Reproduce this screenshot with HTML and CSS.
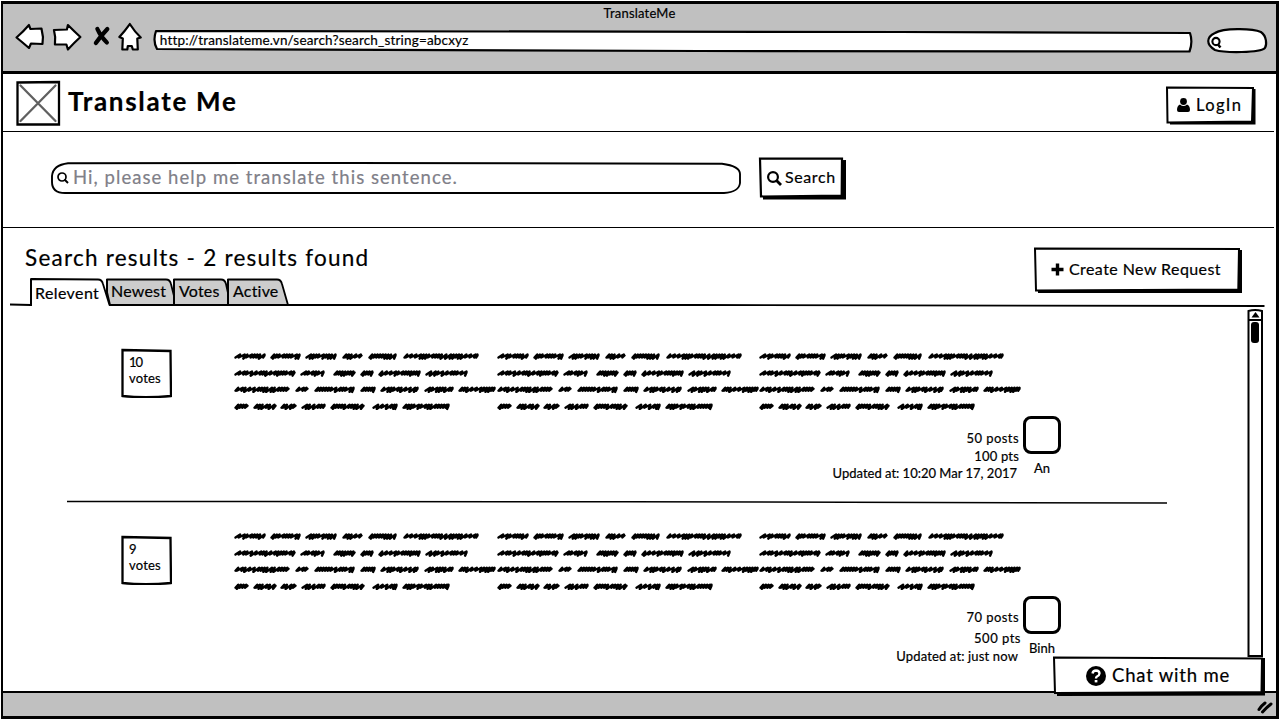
FILE: index.html
```
<!DOCTYPE html>
<html lang="en">
<head>
<meta charset="utf-8">
<title>TranslateMe</title>
<link rel="stylesheet" href="styles.css">
</head>
<body>
<div class="window">
  <header class="chrome">
    <div class="chrome-title"><span class="t">TranslateMe</span></div>
    <div class="toolbar">
      <svg class="nav-icons" width="130" height="32" viewBox="14 21 130 32">
        <g fill="#fff" stroke="#000" stroke-width="2.200" stroke-linejoin="round">
          <path d="M16.500 37.500 Q23 32 29 25 L30.500 29 L41.500 28.500 L43 37 L42.500 44 L31 43.500 L29 48 Q22 42 16.500 37.500Z"/>
          <path d="M54 30 L67 29.500 L68 25 Q75 32 80.500 37 Q74 43 68 49.500 L66.500 44.500 L55 44.500 Q56 37 54 30Z"/>
          <path d="M130 24 Q125 31 119.500 37 L123 38.500 L122.500 49.500 L127.500 49.500 L128 46 L132 46 L133 49.500 L138 49.500 L137.500 38.500 L141 37.500 Q135 32 130 24Z"/>
        </g>
        <path d="M97.500 29 Q101 37 107 42.500 M107.500 29 Q101 36 96 43" fill="none" stroke="#000" stroke-width="4.200" stroke-linecap="round"/>
      </svg>
      <div class="address">
        <svg class="backdrop" width="1042" height="24" viewBox="152 29 1042 24"><path d="M156 31 Q500 31.500 900 32 L1190 33 Q1193 42 1189.500 51.500 L700 51 L157 49 Q152.500 41 156 31Z" fill="#fff" stroke="#000" stroke-width="2.200" stroke-linejoin="round"/></svg>
        <span class="t">http://translateme.vn/search?search_string=abcxyz</span>
      </div>
      <svg class="mini-search" width="62" height="28" viewBox="1206 27 62 28"><path d="M1215 33 C1223 28 1252 28 1261 32 C1267 36 1267 45 1265 48 C1260 53 1225 53 1215 50 C1206 45 1206 37 1215 33Z" fill="#fff" stroke="#000" stroke-width="2.200"/><circle cx="1216" cy="41.500" r="3.600" fill="none" stroke="#000" stroke-width="2.100"/><path d="M1218 44.500 L1220.500 47.500" stroke="#000" stroke-width="2.600"/></svg>
    </div>
  </header>

  <section class="app-head">
    <svg class="logo" width="46" height="46" viewBox="15 80 46 46"><path d="M17.500 82.500 L59 82 L59 124.500 L17.500 124.500Z" fill="#fff" stroke="#000" stroke-width="2.300"/><path d="M20.500 85.500 L55.500 121 M55.500 85.500 L20.500 121" stroke="#606060" stroke-width="2.300" stroke-linecap="round"/></svg>
    <h1><span class="t">Translate Me</span></h1>
    <button class="btn login">
      <svg class="backdrop" width="92" height="40" viewBox="1165 86 92 40"><path d="M1170 91 L1255.500 89 V124.500 H1170Z"/><path d="M1167 87.500 L1253 88 L1252 121.500 L1167.500 122.500Z" fill="#fff" stroke="#000" stroke-width="2"/></svg>
      <svg width="13" height="14" viewBox="0 0 13 14"><circle cx="6.500" cy="3.500" r="3.400"/><path d="M3 6.500 Q6.500 9.500 10 6.500 Q13 7.500 13 12 Q13 14 11 14 H2 Q0 14 0 12 Q0 7.500 3 6.500Z"/></svg>
      <span class="t">LogIn</span>
    </button>
  </section>

  <section class="search-row">
    <div class="field">
      <svg class="backdrop" width="692" height="34" viewBox="50 161 692 34"><path d="M68 163.200 L350 163 L722 163.700 Q740 166 740 174 V183 Q739 192 724 193 H65 Q52 193 52 182 V176 Q53 165 68 163.200Z" fill="#fff" stroke="#000" stroke-width="1.900"/></svg>
      <svg width="12" height="12" viewBox="0 0 12 12"><circle cx="5" cy="5" r="4" fill="none" stroke="#000" stroke-width="1.700"/><path d="M7.500 7.500 L11 11" stroke="#000" stroke-width="2"/></svg>
      <span class="t">Hi, please help me translate this sentence.</span>
    </div>
    <button class="btn find">
      <svg class="backdrop" width="88" height="43" viewBox="758 157 88 43"><path d="M763 162 L846 160 V199.500 H763Z"/><path d="M760 158.700 L842 158.500 L841.700 195.500 L761 196.500Z" fill="#fff" stroke="#000" stroke-width="2.200"/></svg>
      <svg width="15" height="15" viewBox="0 0 15 15"><circle cx="6" cy="6" r="4.900" fill="none" stroke="#000" stroke-width="2.200"/><path d="M9.500 9.500 L14 14" stroke="#000" stroke-width="2.800"/></svg>
      <span class="t">Search</span>
    </button>
  </section>

  <section class="results-head">
    <div class="results-left">
      <h2><span class="t">Search results - 2 results found</span></h2>
      <nav class="tabs">
        <svg class="backdrop" width="1257" height="32" viewBox="9 277 1257 32">
          <g stroke="#000" stroke-width="1.800" stroke-linejoin="round">
            <path d="M228 305 V279.500 H277 Q281 279.500 282 284 L288 305Z" fill="#ccc"/>
            <path d="M174 305 V279.500 H221 Q225 279.500 226 284 L228 293 V305Z" fill="#ccc"/>
            <path d="M107 279.500 H166 Q170 279.500 171 284 L174 296 V305 H110 L107 292Z" fill="#ccc"/>
            <path d="M10 304.500 L31 305 V279 L98 279.500 Q102 279.500 103 284 L109.500 305 L700 305 L1264.500 306" fill="none"/>
            <path d="M107 279 V296 M31 279 V306 M174 279 V306 M228 279 V306" fill="none"/>
          </g>
        </svg>
        <span class="t tab tab-active">Relevent</span><span class="t tab newest">Newest</span><span class="t tab votes-tab">Votes</span><span class="t tab">Active</span>
      </nav>
    </div>
    <button class="btn create">
      <svg class="backdrop" width="210" height="46" viewBox="1033 247 210 46"><path d="M1038 251 L1242 250 V293 H1038Z"/><path d="M1035 248.500 L1239 249 L1238.300 289.500 L1036 290.500Z" fill="#fff" stroke="#000" stroke-width="2"/></svg>
      <svg width="13" height="13" viewBox="0 0 13 13"><path d="M6.500 .5 V12.500 M.5 6.500 H12.500" stroke="#000" stroke-width="3.400"/></svg>
      <span class="t">Create New Request</span>
    </button>
  </section>

  <main class="list">
    <div class="entries">
      <article class="entry first">
        <div class="votes">
          <svg class="backdrop" width="52" height="50" viewBox="120 348 52 50"><path d="M122.500 350 L170.500 351 L171 396 Q145 398.500 122.500 396Z" fill="#fff" stroke="#000" stroke-width="2.300"/></svg>
          <span class="t ten">10</span><span class="t">votes</span>
        </div>
        <svg class="scribble" width="790" height="64" viewBox="0 0 790 64"></svg>
        <div class="meta">
          <div class="stats"><span class="t posts">50 posts</span><span class="t pts">100 pts</span><span class="t updated">Updated at: 10:20 Mar 17, 2017</span></div>
          <div class="user"><i class="avatar"></i><span class="t">An</span></div>
        </div>
      </article>
      <svg class="rule" width="1100" height="4" viewBox="0 0 1100 4"><path d="M0 1.500 L560 1.700 L1100 3" fill="none" stroke="#000" stroke-width="1.500"/></svg>
      <article class="entry second">
        <div class="votes">
          <svg class="backdrop" width="52" height="50" viewBox="120 348 52 50"><path d="M122.500 350 L170.500 351 L171 396 Q145 398.500 122.500 396Z" fill="#fff" stroke="#000" stroke-width="2.300"/></svg>
          <span class="t">9</span><span class="t">votes</span>
        </div>
        <svg class="scribble" width="790" height="64" viewBox="0 0 790 64"></svg>
        <div class="meta">
          <div class="stats"><span class="t posts">70 posts</span><span class="t pts">500 pts</span><span class="t updated">Updated at: just now</span></div>
          <div class="user"><i class="avatar"></i><span class="t">Binh</span></div>
        </div>
      </article>
    </div>
    <svg class="scrollbar" width="18" height="350" viewBox="1246 308 18 350"><path d="M1248.500 311 Q1255 309 1262 311 V656 H1248.500Z" fill="#fff" stroke="#000" stroke-width="2"/><path d="M1248 320 H1262" stroke="#000" stroke-width="2"/><path d="M1255.500 312 L1259.500 317.500 H1251.500Z"/><rect x="1251" y="322" width="8" height="21" rx="3"/></svg>
  </main>

  <footer class="status">
    <svg width="18" height="14" viewBox="1257 700 18 14"><path d="M1260 709.500 Q1262 706 1266 703 M1263.500 712 Q1268 707 1272 704" fill="none" stroke="#000" stroke-width="3" stroke-linecap="round"/></svg>
  </footer>

  <button class="btn chat">
    <svg class="backdrop" width="213" height="42" viewBox="1053 656 213 42"><path d="M1057 660 L1265 658 V695.500 L1057 696Z"/><path d="M1054 657.500 L1262 658.500 L1261.500 692 L1055 693Z" fill="#fff" stroke="#000" stroke-width="2"/></svg>
    <svg width="20" height="20" viewBox="0 0 20 20"><circle cx="10" cy="10" r="10"/><path d="M6.500 7.500 Q7 4.500 10 4.500 Q13.500 4.700 13.500 7.500 Q13.300 9.500 11 10.500 Q10 11 10 12.500" fill="none" stroke="#fff" stroke-width="2.400"/><rect x="8.700" y="14" width="2.700" height="2.400" fill="#fff"/></svg>
    <span class="t">Chat with me</span>
  </button>
</div>
<script src="scribble.js"></script>
</body>
</html>
```
FILE: styles.css
```
* { box-sizing: border-box; }
body { margin: 0; width: 1280px; height: 720px; overflow: hidden; background: #fff; font-family: Lato, "Open Sans", sans-serif; color: #000; }
h1, h2 { margin: 0; }
.window { position: relative; display: flex; flex-direction: column; width: 1278px; height: 718px; margin: 1px; border: 3px solid #000; border-left-width: 2px; background: #fff; }
.t { white-space: nowrap; -webkit-text-stroke: 0.2px currentColor; }
.backdrop { position: absolute; left: 0; top: 0; z-index: -1; }
.chrome { height: 70px; background: #c0c0c0; border-bottom: 3px solid #000; }
.chrome-title { height: 20px; text-align: center; font-size: 13px; line-height: 19px; letter-spacing: 0.2px; }
.toolbar { display: flex; align-items: flex-start; padding: 0 8px 0 11px; }
.nav-icons { margin-top: -3px; }
.address { position: relative; z-index: 0; width: 1042px; height: 24px; margin: 5px 14px 0 8px; padding-left: 8px; font-size: 13.5px; line-height: 23px; letter-spacing: 0.18px; }
.mini-search { margin-top: 3px; }
.app-head { display: flex; align-items: flex-start; height: 58px; padding: 6px 17px 0 12px; border-bottom: 1.5px solid #000; width: 1271px; }
h1 { flex: 1; padding-left: 7px; font-size: 26px; font-weight: 700; line-height: 42px; letter-spacing: 1.7px; }
.btn { position: relative; z-index: 0; display: flex; align-items: center; border: 0; padding: 0; background: none; color: #000; font-family: inherit; font-size: 16px; letter-spacing: 0.43px; }
.btn .t, .field .t { margin-top: -2px; }
.login { width: 92px; height: 38px; margin-top: 6px; padding-left: 12px; gap: 6px; font-size: 16.5px; letter-spacing: 1.4px; }
.btn.login .t { margin-top: 0; }
.search-row { display: flex; align-items: flex-start; height: 96px; width: 1271px; padding: 25px 0 0 47px; border-bottom: 1.5px solid #000; }
.field { position: relative; z-index: 0; display: flex; align-items: center; gap: 4px; width: 692px; height: 34px; margin: 4px 16px 0 0; padding-left: 7px; font-size: 18.5px; letter-spacing: 1.05px; color: #808088; }
.find { width: 88px; height: 42px; padding-left: 9px; gap: 3px; letter-spacing: 0.6px; }
.btn.find .t { margin-top: -4px; }
.results-head { display: flex; height: 78px; }
.results-left { width: 1030px; padding-top: 14px; }
h2 { padding-left: 22px; font-size: 22.5px; font-weight: 400; line-height: 31px; height: 32px; letter-spacing: 1.25px; }
.tabs { position: relative; z-index: 0; display: flex; margin: 3px 0 0 6px; padding-left: 26px; font-size: 16px; line-height: 27px; letter-spacing: 0.2px; }
.tab-active { width: 76px; padding-top: 2px; letter-spacing: 0.4px; }
.newest { width: 68px; }
.votes-tab { width: 54px; }
.create { width: 210px; height: 44px; margin-top: 19px; padding-left: 18px; gap: 5px; }
.list { display: flex; height: 385px; }
.entries { width: 1243px; }
.entry { display: grid; grid-template-columns: 114px 790px; align-content: start; row-gap: 5px; padding-left: 117px; font-size: 13px; letter-spacing: 0.2px; }
.first { height: 194px; padding-top: 42px; }
.second { height: 185px; padding-top: 24px; }
.votes { position: relative; z-index: 0; display: flex; flex-direction: column; width: 52px; height: 50px; padding: 6px 0 0 9px; line-height: 16px; }
.ten { letter-spacing: -1px; }
.second .votes { margin-top: 7px; }
.meta { grid-column: 1 / 3; display: flex; justify-content: flex-end; }
.stats { display: flex; flex-direction: column; align-items: flex-end; width: 300px; padding-top: 12px; line-height: 18px; }
.posts { margin-right: 1px; letter-spacing: 0.45px; }
.pts { margin-right: 1px; }
.updated { margin-right: 3px; letter-spacing: 0; line-height: 17px; }
.second .pts { margin: 3px -1px 0 0; letter-spacing: 0.5px; }
.second .updated { margin-right: 2px; letter-spacing: 0.15px; }
.second .stats { padding-top: 11px; }
.second .updated { line-height: 19px; }
.user { display: flex; flex-direction: column; align-items: center; width: 38px; margin: -1px -37px 0 3px; line-height: 18px; letter-spacing: 0; }
.avatar { flex: none; width: 38px; height: 38px; border: 3px solid #000; border-radius: 8px; margin-bottom: 5px; }
.rule { display: block; margin-left: 64px; }
.scrollbar { margin-top: 2px; }
.status { display: flex; justify-content: flex-end; height: 25px; padding: 7px 2px 0 0; border-top: 2.5px solid #000; background: #c0c0c0; }
.chat { position: absolute; left: 1050px; top: 652px; width: 213px; height: 40px; padding-left: 33px; gap: 6px; font-size: 18.5px; letter-spacing: 0.8px; }
```
FILE: scribble.js
```
// Each row of filler text: baseline, then [start, end] of every word.
const rows = [
  [8.5, [0,32],[36,67],[71,103],[108,129],[134,163],[169,245]],
  [25.5, [0,62],[66,91],[99,122],[126,140],[144,187],[191,234]],
  [41.7, [0,56],[61,75],[80,121],[126,142],[146,185],[190,220],[224,262]],
  [58.7, [0,15],[19,43],[46,63],[67,92],[96,131],[138,164],[168,216]]
];
let seed = 7;
const rnd = () => (seed = (seed * 16807) % 2147483647) / 2147483647;
let d = '';
for (const [y, ...words] of rows)
  for (const [a, b] of words) {
    let x = a + 1.5;
    d += `M${x} ${y + 1}`;
    while (x < b - 3) {
      const step = rnd() < 0.4 ? 4.6 : 2.7;
      const dip = rnd() < 0.4 ? 2.2 : 1;
      x = Math.min(x + step, b - 1.5);
      d += `L${x.toFixed(1)} ${(y - 2).toFixed(1)}L${(x - 1.4).toFixed(1)} ${(y + dip).toFixed(1)}`;
    }
    d += `L${b - 1.5} ${y - 1}`;
  }
for (const svg of document.querySelectorAll('.scribble'))
  svg.innerHTML = [0, 263, 525].map(x =>
    `<path transform="translate(${x} 0)" d="${d}" fill="none" stroke="#000" stroke-width="2.4" stroke-linejoin="round" stroke-linecap="round"/>`).join('');
```
